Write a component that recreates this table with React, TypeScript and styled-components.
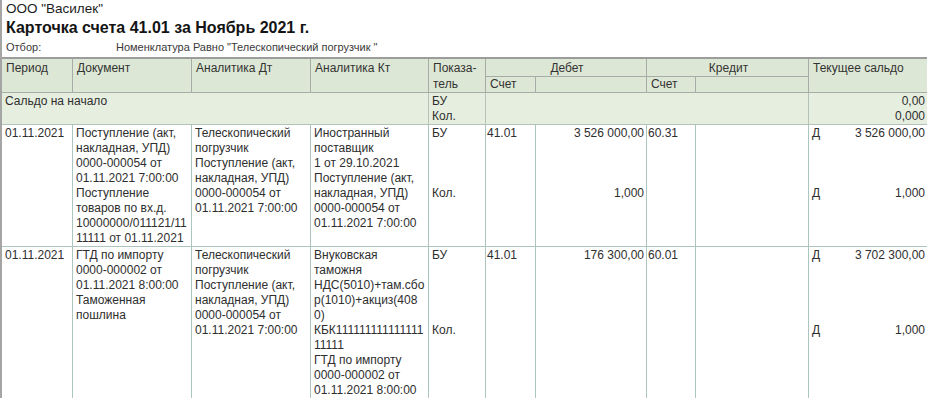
import styled, { createGlobalStyle } from 'styled-components';

const GlobalStyle = createGlobalStyle`
    html, body {
        margin: 0;
        padding: 0;
        background: #fff;
        overflow: hidden;
    }
    body {
        font-family: "Liberation Sans", Arial, sans-serif;
        color: #2e2e2e;
    }
`;

const COLUMNS = '71px 119px 119px 118px 57px 50px 111px 49px 113px 119px';
const HEAD_LINE = '#a7aca6';
const BODY_LINE = '#abc5bf';

const Sheet = styled.div`
    width: 926px;
    border-left: 2px solid #a5a5a5;
`;

const Org = styled.div`
    padding-left: 4px;
    font-size: 13.5px;
    line-height: 17px;
    color: #1c1c1c;
`;

const Title = styled.h1`
    margin: 0;
    padding: 1px 0 0 4px;
    font-size: 16px;
    line-height: 20px;
    font-weight: bold;
    color: #141414;
`;

const Filter = styled.div`
    display: flex;
    height: 19px;
    box-sizing: border-box;
    padding: 1px 0 0 4px;
    font-size: 11px;
    line-height: 16px;
    color: #3a3a3a;
`;

const FilterLabel = styled.span`
    width: 110px;
`;

const Head = styled.div`
    display: grid;
    grid-template-columns: ${COLUMNS};
    grid-template-rows: 18px 16px;
    border-top: 2px solid #9c9c9c;
    background: #dde7d5;
    font-size: 12px;
    line-height: 16px;
    color: #333;
`;

const HeadCell = styled.div<{ $col: string; $row: string; $center?: boolean }>`
    grid-column: ${(p) => p.$col};
    grid-row: ${(p) => p.$row};
    box-sizing: border-box;
    padding: 1px 2px 0 4px;
    border-right: 1px solid ${HEAD_LINE};
    border-bottom: 1px solid ${HEAD_LINE};
    text-align: ${(p) => (p.$center ? 'center' : 'left')};
    white-space: nowrap;
`;

const SubHeadCell = styled(HeadCell)`
    padding-top: 0;
    line-height: 15px;
`;

const Row = styled.div<{ $tint?: boolean }>`
    display: grid;
    grid-template-columns: ${COLUMNS};
    background: ${(p) => (p.$tint ? '#e6eee0' : '#fff')};
    font-size: 12px;
    line-height: 15px;
    color: #2e2e2e;
`;

const Cell = styled.div<{ $span?: string; $right?: boolean; $tight?: boolean }>`
    grid-column: ${(p) => p.$span ?? 'auto'};
    display: flex;
    flex-direction: column;
    box-sizing: border-box;
    padding: 1px 2px 0 ${(p) => (p.$tight ? '1px' : '3px')};
    border-right: 1px solid ${BODY_LINE};
    border-bottom: 1px solid ${BODY_LINE};
    text-align: ${(p) => (p.$right ? 'right' : 'left')};
    white-space: nowrap;
`;

const SaldoCell = styled(Cell)`
    border-color: #b4c2b8;
`;

const Half = styled.div<{ $spread?: boolean }>`
    flex: 1 1 0;
    display: flex;
    justify-content: ${(p) => (p.$spread ? 'space-between' : 'inherit')};
`;

const HalfText = styled.div`
    flex: 1;
`;

type Entry = {
    period: string;
    doc: string[];
    dt: string[];
    kt: string[];
    debitAcc: string;
    debitSum: string;
    debitQty: string;
    creditAcc: string;
    balanceSum: string;
    balanceQty: string;
};

const entries: Entry[] = [
    {
        period: '01.11.2021',
        doc: [
            'Поступление (акт,',
            'накладная, УПД)',
            '0000-000054 от',
            '01.11.2021 7:00:00',
            'Поступление',
            'товаров по вх.д.',
            '10000000/011121/11',
            '11111 от 01.11.2021',
        ],
        dt: ['Телескопический', 'погрузчик', 'Поступление (акт,', 'накладная, УПД)', '0000-000054 от', '01.11.2021 7:00:00'],
        kt: ['Иностранный', 'поставщик', '1 от 29.10.2021', 'Поступление (акт,', 'накладная, УПД)', '0000-000054 от', '01.11.2021 7:00:00'],
        debitAcc: '41.01',
        debitSum: '3 526 000,00',
        debitQty: '1,000',
        creditAcc: '60.31',
        balanceSum: '3 526 000,00',
        balanceQty: '1,000',
    },
    {
        period: '01.11.2021',
        doc: ['ГТД по импорту', '0000-000002 от', '01.11.2021 8:00:00', 'Таможенная', 'пошлина'],
        dt: ['Телескопический', 'погрузчик', 'Поступление (акт,', 'накладная, УПД)', '0000-000054 от', '01.11.2021 7:00:00'],
        kt: [
            'Внуковская',
            'таможня',
            'НДС(5010)+там.сбо',
            'р(1010)+акциз(408',
            '0)',
            'КБК111111111111111',
            '11111',
            'ГТД по импорту',
            '0000-000002 от',
            '01.11.2021 8:00:00',
        ],
        debitAcc: '41.01',
        debitSum: '176 300,00',
        debitQty: '',
        creditAcc: '60.01',
        balanceSum: '3 702 300,00',
        balanceQty: '1,000',
    },
];

function Lines({ items }: { items: string[] }) {
    return (
        <>
            {items.map((line, i) => (
                <div key={i}>{line}</div>
            ))}
        </>
    );
}

function Split({ top, bottom, right, tight }: { top: string; bottom: string; right?: boolean; tight?: boolean }) {
    return (
        <Cell $right={right} $tight={tight}>
            <Half>
                <HalfText>{top}</HalfText>
            </Half>
            <Half>
                <HalfText>{bottom}</HalfText>
            </Half>
        </Cell>
    );
}

function EntryRow({ entry }: { entry: Entry }) {
    return (
        <Row>
            <Cell>{entry.period}</Cell>
            <Cell>
                <Lines items={entry.doc} />
            </Cell>
            <Cell>
                <Lines items={entry.dt} />
            </Cell>
            <Cell>
                <Lines items={entry.kt} />
            </Cell>
            <Split top="БУ" bottom="Кол." />
            <Split top={entry.debitAcc} bottom="" tight />
            <Split top={entry.debitSum} bottom={entry.debitQty} right />
            <Split top={entry.creditAcc} bottom="" tight />
            <Split top="" bottom="" />
            <Cell>
                <Half $spread>
                    <span>Д</span>
                    <span>{entry.balanceSum}</span>
                </Half>
                <Half $spread>
                    <span>Д</span>
                    <span>{entry.balanceQty}</span>
                </Half>
            </Cell>
        </Row>
    );
}

export default function App() {
    return (
        <>
            <GlobalStyle />
            <Sheet>
                <Org>ООО "Василек"</Org>
                <Title>Карточка счета 41.01 за Ноябрь 2021 г.</Title>
                <Filter>
                    <FilterLabel>Отбор:</FilterLabel>
                    <span>Номенклатура Равно "Телескопический погрузчик "</span>
                </Filter>

                <Head>
                    <HeadCell $col="1" $row="1 / 3">Период</HeadCell>
                    <HeadCell $col="2" $row="1 / 3">Документ</HeadCell>
                    <HeadCell $col="3" $row="1 / 3">Аналитика Дт</HeadCell>
                    <HeadCell $col="4" $row="1 / 3">Аналитика Кт</HeadCell>
                    <HeadCell $col="5" $row="1 / 3">
                        Показа-
                        <br />
                        тель
                    </HeadCell>
                    <HeadCell $col="6 / 8" $row="1" $center>
                        Дебет
                    </HeadCell>
                    <HeadCell $col="8 / 10" $row="1" $center>
                        Кредит
                    </HeadCell>
                    <HeadCell $col="10" $row="1 / 3">Текущее сальдо</HeadCell>
                    <SubHeadCell $col="6" $row="2">Счет</SubHeadCell>
                    <SubHeadCell $col="7" $row="2" />
                    <SubHeadCell $col="8" $row="2">Счет</SubHeadCell>
                    <SubHeadCell $col="9" $row="2" />
                </Head>

                <Row $tint>
                    <SaldoCell $span="1 / 5">Сальдо на начало</SaldoCell>
                    <SaldoCell>
                        <div>БУ</div>
                        <div>Кол.</div>
                    </SaldoCell>
                    <SaldoCell $span="6 / 10" />
                    <SaldoCell $right>
                        <div>0,00</div>
                        <div>0,000</div>
                    </SaldoCell>
                </Row>

                {entries.map((entry, i) => (
                    <EntryRow key={i} entry={entry} />
                ))}
            </Sheet>
        </>
    );
}
